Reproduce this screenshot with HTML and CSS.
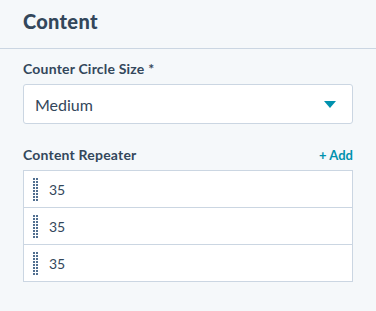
FILE: index.html
```html
<!DOCTYPE html>
<html lang="en">
<head>
  <meta charset="UTF-8">
  <title>Content</title>
  <link rel="stylesheet" href="styles.css">
</head>
<body>
  <div class="panel">
    <!-- header -->
    <div class="panel-head">
      <h2>Content</h2>
    </div>

    <div class="panel-body">
      <!-- select field -->
      <div class="field">
        <label class="field-label">Counter Circle Size *</label>
        <div class="select">
          <span>Medium</span>
          <svg class="caret" width="12" height="7" viewBox="0 0 12 7"><path d="M0 0H12L6 7Z" fill="#0091ae"/></svg>
        </div>
      </div>

      <!-- repeater -->
      <div class="field">
        <div class="repeater-head">
          <span class="field-label">Content Repeater</span>
          <a href="#" class="add">+ Add</a>
        </div>
        <div class="repeater">
          <div class="item"><span class="handle"></span><span>35</span></div>
          <div class="item"><span class="handle"></span><span>35</span></div>
          <div class="item"><span class="handle"></span><span>35</span></div>
        </div>
      </div>
    </div>
  </div>
</body>
</html>
```

FILE: styles.css
```css
html, body {
  margin: 0;
  background: #f5f8fa;
}
body {
  font-family: "Lato", "Open Sans", sans-serif;
  color: #33475b;
}
a {
  text-decoration: none;
}
.panel-head {
  height: 48px;
  border-bottom: 1px solid #cbd6e2;
  padding: 0 23px;
  display: flex;
  align-items: center;
}
.panel-head h2 {
  margin: 0;
  margin-top: -6px;
  font-size: 20px;
  font-weight: 900;
  letter-spacing: 0.3px;
}
.panel-body {
  padding: 11px 23px 0 23px;
}
.field {
  margin-bottom: 22px;
}
.field-label {
  display: block;
  font-size: 14px;
  font-weight: 700;
  line-height: 18px;
  letter-spacing: 0.2px;
  margin-bottom: 6px;
}
.select {
  height: 38px;
  background: #fff;
  border: 1px solid #cbd6e2;
  border-radius: 3px;
  display: flex;
  align-items: center;
  justify-content: space-between;
  padding: 0 16px 0 11px;
  font-size: 16px;
}
.caret {
  display: block;
}
.repeater-head {
  display: flex;
  justify-content: space-between;
  align-items: baseline;
}
.add {
  color: #0091ae;
  font-size: 13px;
  font-weight: 700;
}
.repeater {
  background: #fff;
  border: 1px solid #cbd6e2;
}
.item {
  height: 36px;
  display: flex;
  align-items: center;
  padding-left: 9px;
  font-size: 14px;
  border-top: 1px solid #cbd6e2;
}
.item:first-child {
  border-top: none;
}
/* 2 x 8 grid of dots */
.handle {
  width: 5px;
  height: 23px;
  margin-right: 11px;
  background: linear-gradient(90deg, #516f90 2px, transparent 2px) 0 0 / 3px 3px;
  -webkit-mask: linear-gradient(#000 2px, transparent 2px) 0 0 / 3px 3px;
  mask: linear-gradient(#000 2px, transparent 2px) 0 0 / 3px 3px;
}
```
